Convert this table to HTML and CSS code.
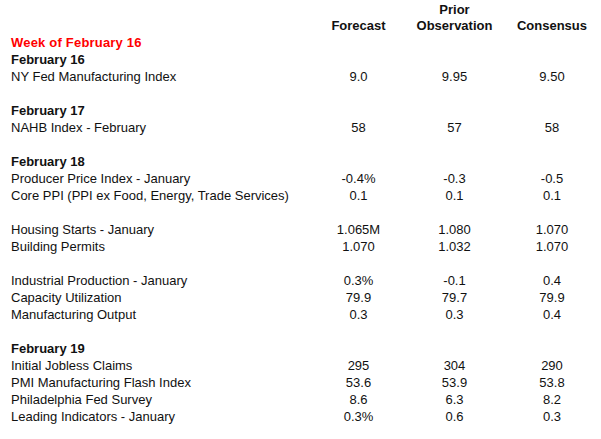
FILE: index.html
```html
<!DOCTYPE html>
<html lang="en">
<head>
<meta charset="utf-8">
<title>Economic Calendar</title>
<link rel="stylesheet" href="styles.css">
</head>
<body>
<div class="cal">
  <div class="head label"></div>
  <div class="head num">Forecast</div>
  <div class="head num">Prior<br>Observation</div>
  <div class="head num">Consensus</div>

  <div class="week label">Week of February 16</div><div></div><div></div><div></div>

  <div class="date label">February 16</div><div></div><div></div><div></div>
  <div class="label">NY Fed Manufacturing Index</div><div class="num">9.0</div><div class="num">9.95</div><div class="num">9.50</div>
  <div class="blank"></div><div></div><div></div><div></div>

  <div class="date label">February 17</div><div></div><div></div><div></div>
  <div class="label">NAHB Index - February</div><div class="num">58</div><div class="num">57</div><div class="num">58</div>
  <div class="blank"></div><div></div><div></div><div></div>

  <div class="date label">February 18</div><div></div><div></div><div></div>
  <div class="label">Producer Price Index - January</div><div class="num">-0.4%</div><div class="num">-0.3</div><div class="num">-0.5</div>
  <div class="label">Core PPI (PPI ex Food, Energy, Trade Services)</div><div class="num">0.1</div><div class="num">0.1</div><div class="num">0.1</div>
  <div class="blank"></div><div></div><div></div><div></div>
  <div class="label">Housing Starts - January</div><div class="num">1.065M</div><div class="num">1.080</div><div class="num">1.070</div>
  <div class="label">Building Permits</div><div class="num">1.070</div><div class="num">1.032</div><div class="num">1.070</div>
  <div class="blank"></div><div></div><div></div><div></div>
  <div class="label">Industrial Production - January</div><div class="num">0.3%</div><div class="num">-0.1</div><div class="num">0.4</div>
  <div class="label">Capacity Utilization</div><div class="num">79.9</div><div class="num">79.7</div><div class="num">79.9</div>
  <div class="label">Manufacturing Output</div><div class="num">0.3</div><div class="num">0.3</div><div class="num">0.4</div>
  <div class="blank"></div><div></div><div></div><div></div>

  <div class="date label">February 19</div><div></div><div></div><div></div>
  <div class="label">Initial Jobless Claims</div><div class="num">295</div><div class="num">304</div><div class="num">290</div>
  <div class="label">PMI Manufacturing Flash Index</div><div class="num">53.6</div><div class="num">53.9</div><div class="num">53.8</div>
  <div class="label">Philadelphia Fed Survey</div><div class="num">8.6</div><div class="num">6.3</div><div class="num">8.2</div>
  <div class="label">Leading Indicators - January</div><div class="num">0.3%</div><div class="num">0.6</div><div class="num">0.3</div>
</div>
</body>
</html>
```
FILE: styles.css
```css
html, body {
  margin: 0;
  padding: 0;
  background: #ffffff;
}

body {
  font-family: "Liberation Sans", Arial, sans-serif;
  font-size: 13px;
  color: #111111;
  overflow: hidden;
}

.cal {
  display: grid;
  grid-template-columns: 300px 95px 97px 98px;
  grid-template-rows: 32px;
  grid-auto-rows: 17px;
  padding: 2px 0 0 11px;
  line-height: 17px;
}

.head {
  grid-row: 1;
  height: 32px;
  display: flex;
  flex-direction: column;
  justify-content: flex-end;
  line-height: 16px;
  font-weight: bold;
}

.head.num {
  align-items: center;
}

.num {
  text-align: center;
  white-space: nowrap;
}

.label {
  white-space: nowrap;
}

.week {
  color: #ff0000;
  font-weight: bold;
  letter-spacing: 0.2px;
}

.date {
  font-weight: bold;
}
```
